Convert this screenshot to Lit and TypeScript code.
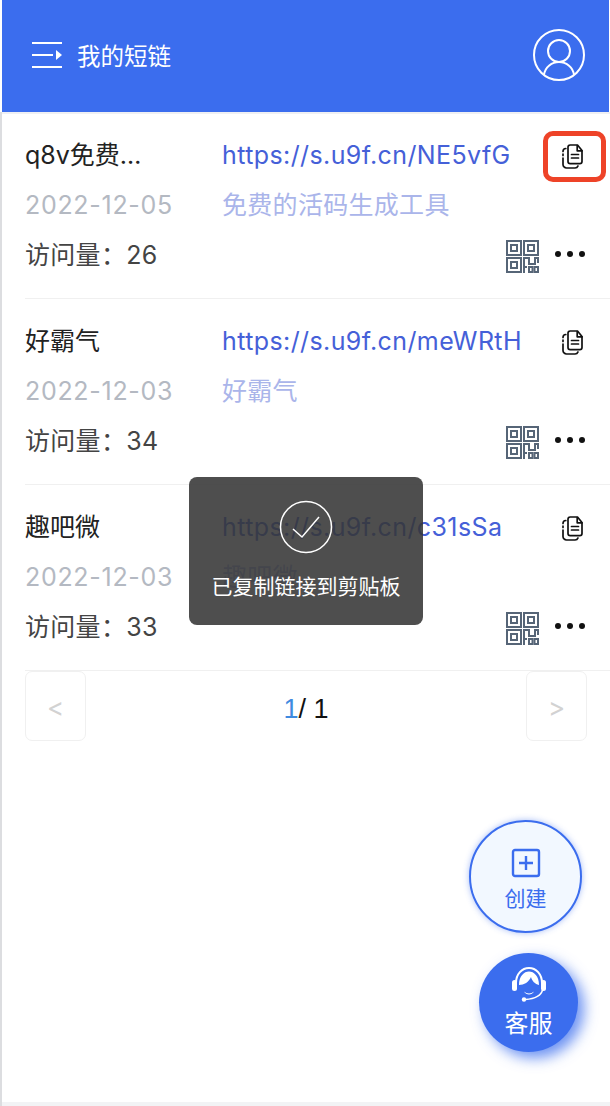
import { css, html, LitElement, svg } from 'lit';
import { customElement } from 'lit/decorators.js';

const links = [
    { name: 'q8v免费…', url: 'https://s.u9f.cn/NE5vfG', date: '2022-12-05', note: '免费的活码生成工具', visits: 26, marked: true },
    { name: '好霸气', url: 'https://s.u9f.cn/meWRtH', date: '2022-12-03', note: '好霸气', visits: 34, marked: false },
    { name: '趣吧微', url: 'https://s.u9f.cn/c31sSa', date: '2022-12-03', note: '趣吧微', visits: 33, marked: false },
];

const copyIcon = svg`<svg class="copy-icon" viewBox="0 0 22 25" fill="none" stroke="#111" stroke-width="1.7" stroke-linecap="round" stroke-linejoin="round">
  <path d="M6 3.200V17.500a2.200 2.200 0 0 0 2.200 2.200h9.600a2.200 2.200 0 0 0 2.200-2.200V6.500L15.500 1H8.200A2.200 2.200 0 0 0 6 3.200z"/>
  <path d="M15.200 1.500V6.800H20"/>
  <path d="M9.500 10.500h7M9.500 14h7"/>
  <path d="M3.800 4.500A3 3 0 0 0 1 7.500M1 10v1.500M1 14v6.500A3.500 3.500 0 0 0 4.500 24h8.500a3.200 3.200 0 0 0 3-2"/>
</svg>`;

const qrIcon = svg`<svg class="qr-icon" viewBox="0 0 33 33" fill="none" stroke="#566577" stroke-width="2">
  <rect x="1" y="1" width="14" height="14"/><rect x="5" y="5" width="6" height="6"/>
  <rect x="18" y="1" width="14" height="14"/><rect x="22" y="5" width="6" height="6"/>
  <rect x="1" y="18" width="14" height="14"/><rect x="5" y="22" width="6" height="6"/>
  <path d="M18 33V18h5v6h6v-6h3v5"/>
  <path d="M18 27h3"/>
  <rect x="23" y="27" width="3.500" height="5"/><rect x="28.500" y="27" width="3.500" height="5"/>
</svg>`;

// Links list page
// -----------------------------------------------------------------------------
@customElement('app-root')
export class AppRoot extends LitElement {
    static override styles = css`
    :host {
      display: block;
      height: 1106px;
      overflow: hidden;
      position: relative;
      background: #fff;
      font-family: Inter, "Noto Sans CJK SC", sans-serif;
    }
    .page {
      height: 1102px;
      margin-left: 2px;
      box-sizing: border-box;
      background: #fff;
    }
    .strip-left {
      position: absolute;
      left: 0;
      top: 112px;
      width: 2px;
      height: 994px;
      background: #dcdde0;
    }
    .strip-bottom {
      height: 4px;
      background: #f2f3f5;
    }
    .header {
      height: 112px;
      margin-right: 1px;
      background: #3b6dee;
      display: flex;
      align-items: center;
      justify-content: space-between;
      padding: 0 24px 2px 29px;
      box-sizing: border-box;
    }
    .title {
      display: flex;
      align-items: center;
      gap: 14px;
      color: #fff;
      font-size: 23.500px;
    }
    .menu-icon { width: 32px; height: 26px; display: block; }
    .user-icon { width: 52px; height: 52px; display: block; }
    .list { border-top: 2px solid #eff0f3; }
    .row {
      height: 186px;
      margin-left: 23px;
      box-sizing: border-box;
      border-bottom: 1px solid #f0f0f0;
      position: relative;
      display: grid;
      grid-template-columns: 197px 1fr;
      grid-template-rows: 50px 50px 50px;
      padding-top: 17px;
      font-size: 25px;
      line-height: 30px;
      align-items: center;
    }
    .row.first { height: 185px; padding-top: 16px; }
    .row .name { color: #222; white-space: nowrap; }
    .row .url { color: #4560d8; letter-spacing: 0.4px; }
    .row .date { color: #b4b9c2; letter-spacing: 0.7px; }
    .row .note { color: #aab5ea; letter-spacing: 0.3px; }
    .row .visits { color: #444; letter-spacing: 0.3px; }
    .actions {
      display: flex;
      align-items: center;
      justify-content: flex-end;
      gap: 16px;
      padding: 2px 25px 0 0;
    }
    .copy-box {
      position: absolute;
      right: 12px;
      top: 18px;
      width: 50px;
      height: 50px;
      display: flex;
      align-items: center;
      justify-content: center;
    }
    .copy-box.marked {
      box-sizing: border-box;
      border: 5px solid #ee4328;
      border-radius: 10px;
      right: 4px;
      width: 63px;
      height: 51px;
      top: 17px;
      padding-right: 3px;
    }
    .copy-icon { width: 22px; height: 25px; display: block; flex: none; }
    .qr-icon { width: 33px; height: 33px; display: block; }
    .more { display: flex; gap: 6px; position: relative; top: -2px; }
    .more i { width: 6px; height: 6px; border-radius: 50%; background: #111; display: block; }
    .pager {
      display: flex;
      justify-content: space-between;
      align-items: center;
      padding: 0 23px;
    }
    .pager-btn {
      width: 61px;
      height: 70px;
      box-sizing: border-box;
      border: 1px solid #f0f0f0;
      border-radius: 7px;
      display: flex;
      align-items: center;
      justify-content: center;
      color: #d2d2d2;
      font-size: 26px;
      padding-top: 2px;
    }
    .pager-count {
      font-family: "Liberation Sans", sans-serif;
      font-size: 27px;
      color: #111;
      padding-top: 6px;
    }
    .pager-count b { font-weight: 400; color: #3f8ae0; }
    .toast {
      position: absolute;
      left: 189px;
      top: 477px;
      width: 234px;
      height: 148px;
      border-radius: 8px;
      background: rgba(53, 53, 53, 0.88);
      color: #fff;
      display: flex;
      flex-direction: column;
      align-items: center;
      padding-top: 23px;
      box-sizing: border-box;
      font-size: 21px;
      line-height: 30px;
      gap: 18px;
    }
    .toast svg { width: 54px; height: 54px; display: block; }
    .fab {
      position: absolute;
      border-radius: 50%;
      display: flex;
      flex-direction: column;
      align-items: center;
      box-sizing: border-box;
    }
    .fab.create {
      left: 469px;
      top: 820px;
      width: 113px;
      height: 113px;
      background: #f2f8ff;
      border: 2px solid #3b6dee;
      box-shadow: 0 0 6px rgba(59, 109, 238, 0.45);
      color: #3b6dee;
      font-size: 21px;
      line-height: 30px;
      padding-top: 26px;
      gap: 6px;
    }
    .fab.create svg { width: 30px; height: 30px; display: block; }
    .fab.service {
      left: 479px;
      top: 953px;
      width: 99px;
      height: 99px;
      background: #3b6dee;
      box-shadow: 6px 6px 14px rgba(59, 109, 238, 0.75);
      color: #fff;
      font-size: 24px;
      line-height: 30px;
      padding-top: 13px;
      gap: 7px;
    }
    .fab.service svg { width: 36px; height: 36px; display: block; }
  `;

    private renderRow(link: (typeof links)[number], index: number) {
        return html`<div class="row ${index === 0 ? 'first' : ''}">
      <div class="name">${link.name}</div>
      <div class="url">${link.url}</div>
      <div class="date">${link.date}</div>
      <div class="note">${link.note}</div>
      <div class="visits">访问量：${link.visits}</div>
      <div class="actions">${qrIcon}<span class="more"><i></i><i></i><i></i></span></div>
      <div class="copy-box ${link.marked ? 'marked' : ''}">${copyIcon}</div>
    </div>`;
    }

    override render() {
        return html`<div class="page">
        <div class="header">
          <div class="title">
            <svg class="menu-icon" viewBox="0 0 32 26" fill="#fff">
              <rect x="1" y="0" width="30" height="2"/>
              <rect x="1" y="12" width="21" height="2"/>
              <rect x="1" y="24" width="30" height="2"/>
              <path d="M25 8l6 5-6 5z"/>
            </svg>
            我的短链
          </div>
          <svg class="user-icon" viewBox="0 0 52 52" fill="none" stroke="#fff" stroke-width="2">
            <circle cx="26" cy="26" r="25"/>
            <circle cx="26" cy="22" r="11"/>
            <path d="M11 46c1-8 8-13 15-13s14 5 15 13"/>
          </svg>
        </div>
        <div class="list">${links.map((link, i) => this.renderRow(link, i))}</div>
        <div class="pager">
          <div class="pager-btn">&lt;</div>
          <div class="pager-count"><b>1</b>/ 1</div>
          <div class="pager-btn">&gt;</div>
        </div>
      </div>
      <div class="strip-bottom"></div>
      <div class="strip-left"></div>
      <div class="toast">
        <svg viewBox="0 0 54 54" fill="none" stroke="#fff" stroke-width="1.500">
          <circle cx="27" cy="27" r="25.500"/>
          <path d="M14 29l9 8 17-20"/>
        </svg>
        已复制链接到剪贴板
      </div>
      <div class="fab create">
        <svg viewBox="0 0 30 30" fill="none" stroke="#3b6dee" stroke-width="2.400">
          <rect x="2" y="2" width="26" height="26" rx="2"/>
          <path d="M15 8v14M8 15h14"/>
        </svg>
        创建
      </div>
      <div class="fab service">
        <svg viewBox="0 0 36 36" fill="#fff">
          <path d="M5 17C5 8 11 2 18 2s13 6 13 15" fill="none" stroke="#fff" stroke-width="2"/>
          <rect x="1" y="14" width="5" height="11" rx="2.500"/>
          <rect x="30" y="14" width="5" height="11" rx="2.500"/>
          <path d="M8 19C8 10 13 5.500 18 5.500S28 10 28 19c-4-1-7-4-8-8-2 5-7 8-12 8z"/>
          <path d="M13 25.500c3 2.500 7 2.500 10 0-2 4-8 4-10 0z"/>
          <path d="M31.500 24c-1 5-7 9-17 9.500" fill="none" stroke="#fff" stroke-width="1.500"/>
          <circle cx="13" cy="33.500" r="2.200"/>
        </svg>
        客服
      </div>`;
    }
}
